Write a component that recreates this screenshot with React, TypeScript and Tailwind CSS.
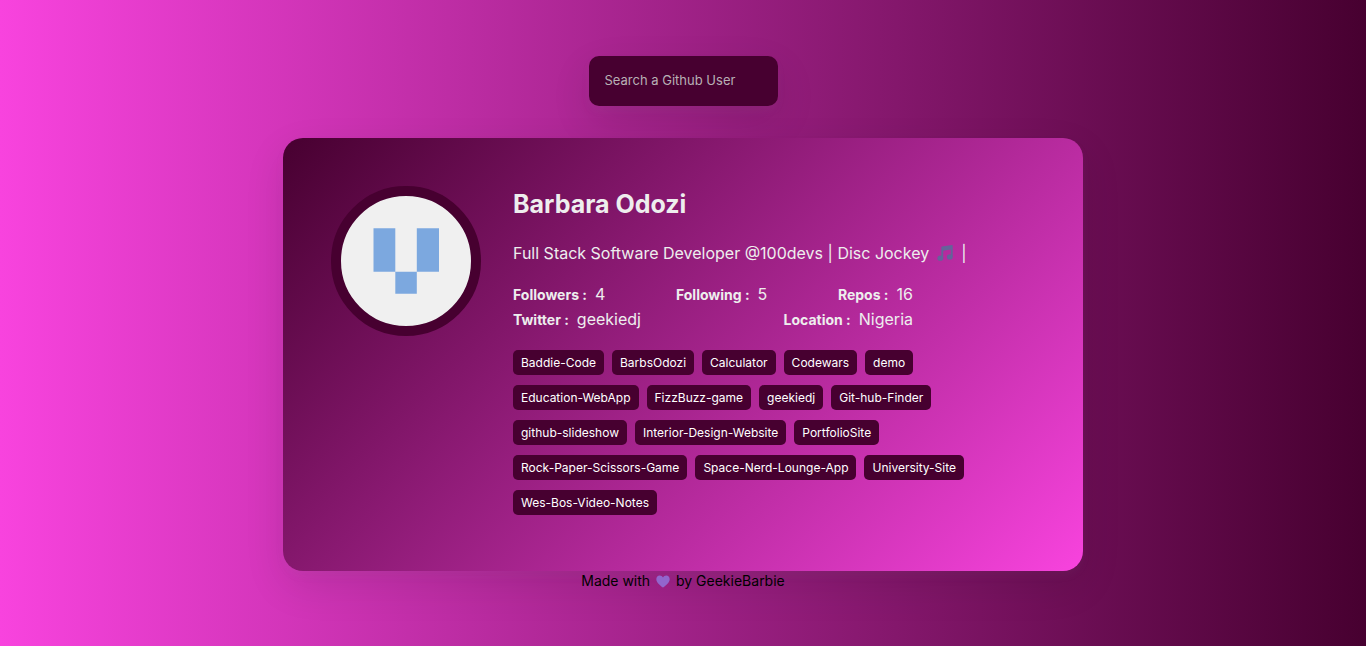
import React from "react";

const stats = [
  [
    { label: "Followers", value: "4" },
    { label: "Following", value: "5" },
    { label: "Repos", value: "16" },
  ],
  [
    { label: "Twitter", value: "geekiedj" },
    { label: "Location", value: "Nigeria" },
  ],
];

const repos = [
  ["Baddie-Code", "BarbsOdozi", "Calculator", "Codewars", "demo"],
  ["Education-WebApp", "FizzBuzz-game", "geekiedj", "Git-hub-Finder"],
  ["github-slideshow", "Interior-Design-Website", "PortfolioSite"],
  ["Rock-Paper-Scissors-Game", "Space-Nerd-Lounge-App", "University-Site"],
  ["Wes-Bos-Video-Notes"],
];

function Avatar() {
  return (
    <svg
      viewBox="0 0 130 130"
      role="img"
      aria-label="Barbara Odozi"
      className="size-[150px] shrink-0 rounded-full border-[10px] border-[#470030] bg-[#f0f0f0]"
    >
      <path fill="#7ca8df" d="M32.5 32.3h21.8v43.5H32.5zM75.8 32.3H98v43.5H75.8zM54.3 75.8h21.5v22H54.3z" />
    </svg>
  );
}

function Notes() {
  return (
    <svg viewBox="0 0 16 16" aria-label="music" role="img" className="mx-2 inline-block size-4 align-[-2px]">
      <g fill="#65629a">
        <path d="M4.300 2.200Q4.300 1.600 4.900 1.500L15 .1q.7-.1.700.6V12h-1.900V4.600L6.200 5.700V13.200H4.300z" />
        <ellipse cx="3.300" cy="13.200" rx="2.900" ry="2.600" />
        <ellipse cx="12.800" cy="11.900" rx="2.900" ry="2.600" />
      </g>
    </svg>
  );
}

function Heart() {
  return (
    <svg viewBox="0 0 14 13" aria-label="love" role="img" className="mx-0.5 inline-block h-[13px] w-[14px] align-[-2px]">
      <path fill="#9266cc" d="M7 12.6C4.6 10.8.3 7.6.3 4.2.3 2 1.8.5 3.7.5 5.200.5 6.400 1.300 7 2.600 7.600 1.300 8.800.5 10.300.5c1.900 0 3.400 1.500 3.400 3.700 0 3.400-4.300 6.600-6.700 8.400z" />
    </svg>
  );
}

export default function App() {
  return (
    <div className="flex min-h-screen flex-col items-center justify-center bg-[linear-gradient(90deg,#f843de,#470030)] font-[Inter,sans-serif]">
      <form className="mb-8" onSubmit={(e) => e.preventDefault()}>
        <input
          type="text"
          aria-label="Search a Github User"
          placeholder="Search a Github User"
          className="block h-[50px] w-[189px] rounded-[10px] bg-[#470030] px-4 pb-0.5 text-[13px] text-white shadow-[0_5px_10px_rgba(154,160,185,0.05),0_15px_40px_rgba(0,0,0,0.1)] outline-none placeholder:text-[#b8b0b5]"
        />
      </form>
      <main className="flex w-full max-w-[800px] gap-8 rounded-[20px] bg-[linear-gradient(135deg,#470030,#f843de)] p-12 shadow-[0_5px_10px_rgba(154,160,185,0.05),0_15px_40px_rgba(0,0,0,0.1)]">
        <Avatar />
        <div className="min-w-0 flex-1 text-[#eee]">
          <h2 className="text-[25px] leading-9 font-bold">Barbara Odozi</h2>
          <p className="mt-[19px] leading-[25px]">
            Full Stack Software Developer @100devs | Disc Jockey
            <Notes />|
          </p>
          <div className="mt-4 max-w-[400px]">
            {stats.map((row) => (
              <ul key={row[0].label} className="flex flex-wrap justify-between leading-[25px]">
                {row.map(({ label, value }) => (
                  <li key={label} className="flex items-baseline gap-2">
                    <strong className="text-sm leading-[25px] font-bold">{label} :</strong>
                    <span>{value}</span>
                  </li>
                ))}
              </ul>
            ))}
          </div>
          <div className="mt-[18px] mb-2 flex flex-col gap-[10px]">
            {repos.map((row) => (
              <div key={row[0]} className="flex flex-wrap gap-2">
                {row.map((name) => (
                  <a key={name} href={"#" + name} className="rounded-[5px] bg-[#470030] px-2 text-xs leading-[25px] font-normal text-white">
                    {name}
                  </a>
                ))}
              </div>
            ))}
          </div>
        </div>
      </main>
      <footer className="text-sm leading-5 text-black">
        Made with <Heart /> by GeekieBarbie
      </footer>
    </div>
  );
}
